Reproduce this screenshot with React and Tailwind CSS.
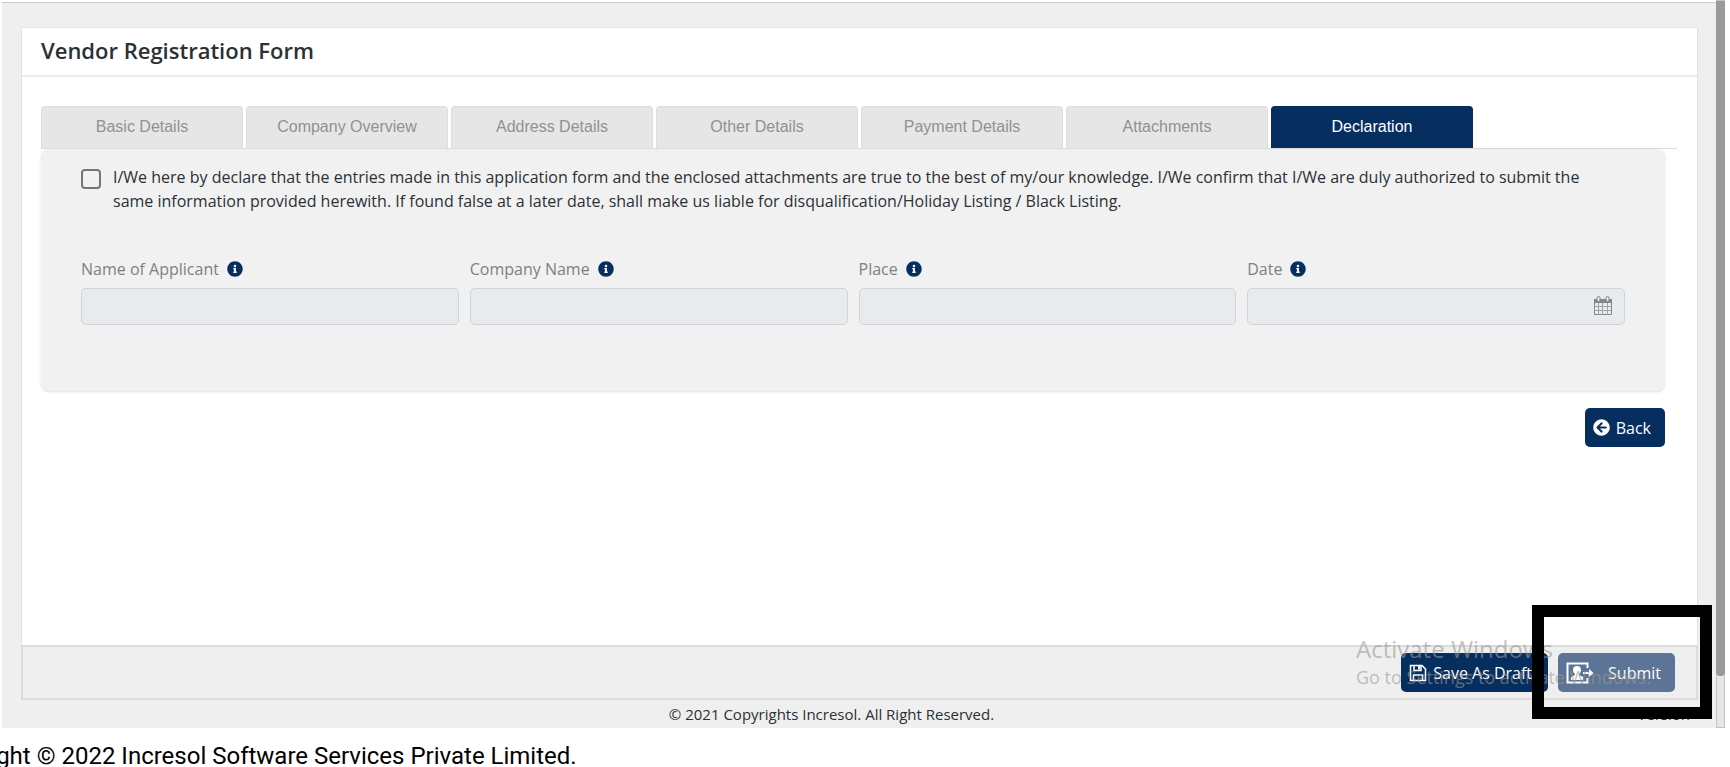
import React, { useState } from "react";
import { FaArrowCircleLeft, FaInfoCircle } from "react-icons/fa";

const TABS = [
  "Basic Details",
  "Company Overview",
  "Address Details",
  "Other Details",
  "Payment Details",
  "Attachments",
  "Declaration",
];

const FIELDS = [
  { name: "applicantName", label: "Name of Applicant" },
  { name: "companyName", label: "Company Name" },
  { name: "place", label: "Place" },
  { name: "date", label: "Date", calendar: true },
];

const CalendarIcon = () => (
  <svg viewBox="0 0 20 20" className="h-5 w-5" fill="none" stroke="#858585">
    <path d="M1 3h18v4H1z" fill="#858585" stroke="none" />
    <path d="M1.5 4.5h17v14h-17z" />
    <path
      d="M1.5 10.5h17M1.5 14.5h17M5.5 7v12M9.5 7v12M14.5 7v12"
      stroke="#a3a3a3"
    />
    <rect x="4" y="0.5" width="3" height="5" rx="1.5" fill="#e8ebee" />
    <rect x="13" y="0.5" width="3" height="5" rx="1.5" fill="#e8ebee" />
  </svg>
);

const SaveIcon = () => (
  <svg
    viewBox="0 0 18 18"
    className="h-[18px] w-[18px]"
    fill="none"
    stroke="white"
    strokeWidth="1.5"
  >
    <path d="M1.500 1.500h11.500l3.500 3.500v11.500h-15z" />
    <path d="M4.500 16v-5h9v5" />
    <path d="M5 2v4.500h7V2" />
    <path d="M9 2h2v3.500H9z" fill="white" stroke="none" />
  </svg>
);

const SubmitIcon = () => (
  <svg viewBox="0 0 28 22" className="h-[22px] w-7" fill="none" stroke="white">
    <path d="M21.500 6V1.500h-20v19h20V16" strokeWidth="2" />
    <path d="M17 11h8" strokeWidth="2" />
    <path d="M23 7l4.500 4-4.500 4z" fill="white" stroke="none" />
    <path
      d="M11 4a4 4 0 0 1 4 4c0 1.800-.8 3-2 4v1l4 2v3H5v-3l4-2v-1c-1.200-1-2-2.200-2-4a4 4 0 0 1 4-4z"
      fill="white"
      stroke="none"
    />
  </svg>
);

const Field = ({ name, label, calendar, value, onChange }) => (
  <div>
    <label
      htmlFor={name}
      className="flex items-center gap-2 text-base text-[#808080]"
    >
      {label}
      <FaInfoCircle className="h-4 w-4 text-[#062e5f]" />
    </label>
    <div className="relative mt-[7px]">
      <input
        id={name}
        name={name}
        disabled
        value={value}
        onChange={onChange}
        className="h-[37px] w-full rounded-[5px] border border-[#ced4da] bg-[#e8ebee] px-3"
      />
      {calendar && (
        <span className="absolute top-2 right-3">
          <CalendarIcon />
        </span>
      )}
    </div>
  </div>
);

const App = () => {
  const [activeTab, setActiveTab] = useState("Declaration");
  const [agreed, setAgreed] = useState(false);
  const [formData, setFormData] = useState({});

  return (
    <div className="relative flex h-screen flex-col overflow-hidden bg-white font-['Open_Sans',sans-serif] text-[#2b3035]">
      <div className="flex flex-1 pr-[5px] pl-0.5">
        <div className="mt-0.5 flex flex-1 flex-col border-t border-[#c8cdd0] bg-[#efefef] pr-[18px] pl-[19px]">
          <main className="mt-6 flex flex-1 flex-col border border-b-0 border-[#e2e2e2] bg-white">
            <header className="flex h-[49px] items-center border-b-2 border-[#ebebeb] pl-[19px]">
              <h1 className="pb-0.5 text-[22px] font-semibold">
                Vendor Registration Form
              </h1>
            </header>

            <div className="mt-[29px] mr-5 ml-[19px]">
              <div
                role="tablist"
                className="flex gap-[3px] border-b border-[#dcdcdc] font-['Liberation_Sans',sans-serif] text-base"
              >
                {TABS.map((tab) => (
                  <button
                    key={tab}
                    type="button"
                    role="tab"
                    aria-selected={tab === activeTab}
                    onClick={() => setActiveTab(tab)}
                    className={`h-[42px] min-w-[202px] rounded-t border border-b-0 px-[30px] pb-0.5 ${
                      tab === activeTab
                        ? "border-[#062e5f] bg-[#062e5f] text-white"
                        : "border-[#dedede] bg-[#e6e6e6] text-[#919191]"
                    }`}
                  >
                    {tab}
                  </button>
                ))}
              </div>

              <section className="mr-3 rounded-lg bg-[#f1f1f1] px-10 pt-4 pb-[66px] shadow-sm">
                <label className="flex gap-3">
                  <input
                    type="checkbox"
                    checked={agreed}
                    onChange={(e) => setAgreed(e.target.checked)}
                    className="mt-1 h-5 w-5 shrink-0 appearance-none rounded-sm border-2 border-[#757575] checked:bg-[#062e5f]"
                  />
                  <span className="pr-8 text-base leading-6">
                    I/We here by declare that the entries made in this
                    application form and the enclosed attachments are true to
                    the best of my/our knowledge. I/We confirm that I/We are
                    duly authorized to submit the same information provided
                    herewith. If found false at a later date, shall make us
                    liable for disqualification/Holiday Listing / Black Listing.
                  </span>
                </label>

                <div className="mt-11 grid grid-cols-4 gap-[11px]">
                  {FIELDS.map((field) => (
                    <Field
                      key={field.name}
                      {...field}
                      value={formData[field.name] || ""}
                      onChange={(e) =>
                        setFormData({
                          ...formData,
                          [field.name]: e.target.value,
                        })
                      }
                    />
                  ))}
                </div>
              </section>

              <div className="mt-[17px] mr-3 flex justify-end">
                <button
                  type="button"
                  className="flex h-[39px] items-center gap-1.5 rounded-[5px] bg-[#062e5f] pr-3.5 pl-2 text-base text-white"
                >
                  <FaArrowCircleLeft className="h-[17px] w-[17px]" />
                  Back
                </button>
              </div>
            </div>
          </main>

          <div className="flex h-[55px] items-center justify-end gap-2.5 border-2 border-[#dbdbdb] pr-[21px]">
            <button
              type="button"
              className="flex h-[39px] items-center gap-1.5 rounded-[5px] bg-[#062e5f] pr-4 pl-2 text-base text-white"
            >
              <SaveIcon />
              Save As Draft
            </button>
            <button
              type="button"
              className="flex h-[39px] items-center gap-3.5 rounded-[5px] bg-[#5c7495] pr-3.5 pl-2 text-base text-white"
            >
              <SubmitIcon />
              Submit
            </button>
          </div>

          <footer className="grid h-7 grid-cols-3 items-center text-[15px]">
            <span className="col-start-2 pr-14 text-center">
              © 2021 Copyrights Incresol. All Right Reserved.
            </span>
            <span className="pr-2 text-right">Version</span>
          </footer>
        </div>

        {/* page scrollbar */}
        <div className="w-[9px] border border-[#c4c4c4] bg-[#e6e6e6]">
          <div className="-mx-px h-[93%] rounded-b bg-[#999]" />
        </div>
      </div>

      <div className="flex h-[39px] w-1/3 items-center justify-end pt-4 font-['Roboto',sans-serif] text-2xl whitespace-nowrap text-black">
        Copyright © 2022 Incresol Software Services Private Limited.
      </div>

      {/* system watermark, drawn over the page */}
      <div className="pointer-events-none absolute right-[76px] bottom-[78px] w-[298px] whitespace-nowrap text-[#999]/60">
        <p className="text-2xl leading-8">Activate Windows</p>
        <p className="text-lg leading-6">Go to Settings to activate Windows.</p>
      </div>

      {/* highlight around the submit button */}
      <div className="pointer-events-none absolute right-[18px] bottom-12 h-[114px] w-[180px] border-[12px] border-black" />
    </div>
  );
};

export default App;
